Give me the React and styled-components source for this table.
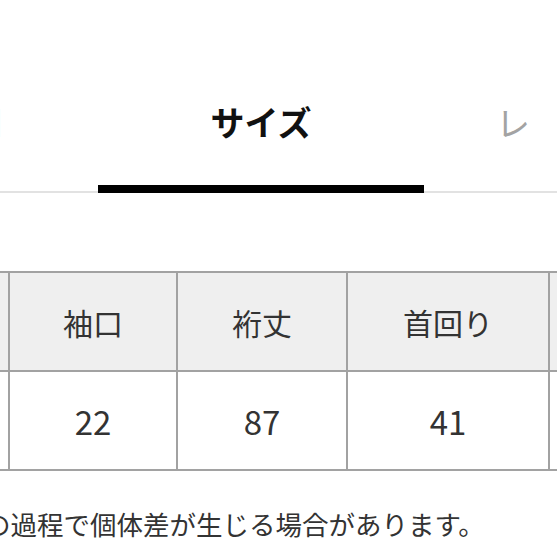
import React from "react";
import styled, { createGlobalStyle } from "styled-components";

const GlobalStyle = createGlobalStyle`
  html, body {
    margin: 0;
    padding: 0;
    background: #fff;
    overflow: hidden;
  }
  body {
    font-family: "Noto Sans CJK JP", "Noto Sans", sans-serif;
    color: #333;
  }
`;

const Root = styled.div`
  width: 557px;
  height: 557px;
  overflow: hidden;
`;

const TabBar = styled.div`
  display: flex;
  height: 193px;
  margin-left: -230px;
  box-shadow: inset 0 -2px 0 #e2e2e2;
`;

const Tab = styled.div`
  flex: 0 0 auto;
  width: ${(props) => props.$width}px;
  box-sizing: border-box;
  padding-top: 105px;
  text-align: ${(props) => props.$align || "center"};
  padding-left: ${(props) => props.$indent || 0}px;
  font-size: 34px;
  line-height: 34px;
  white-space: nowrap;
  font-weight: ${(props) => (props.$active ? 700 : 400)};
  color: ${(props) => (props.$active ? "#111" : "#a3a3a3")};
  border-bottom: 8px solid
    ${(props) => (props.$active ? "#000" : "transparent")};
`;

const TableWrap = styled.div`
  margin-top: 78px;
  overflow: hidden;
`;

const Grid = styled.div`
  display: grid;
  grid-template-columns: 166px 166px 168px 200px 166px;
  grid-auto-rows: 97px;
  gap: 2px;
  padding: 2px;
  width: max-content;
  margin-left: -160px;
  background: #a2a2a2;
`;

const Cell = styled.div`
  display: flex;
  align-items: center;
  justify-content: center;
  background: ${(props) => (props.$head ? "#efefef" : "#fff")};
  font-size: ${(props) => (props.$head ? 30 : 33)}px;
  color: #333;
  white-space: nowrap;
`;

const Note = styled.p`
  margin: 40px 0 0 -69px;
  font-size: 26.5px;
  line-height: 26px;
  color: #333;
  white-space: nowrap;
`;

const tabs = [
  { label: "商品説明", width: 328 },
  { label: "サイズ", width: 326, active: true },
  { label: "レ", width: 200, align: "left", indent: 72 },
];

const columns = [
  { name: "身幅", value: "58" },
  { name: "袖口", value: "22" },
  { name: "裄丈", value: "87" },
  { name: "首回り", value: "41" },
  { name: "着丈", value: "70" },
];

export default function App() {
  return (
    <Root>
      <GlobalStyle />
      <TabBar>
        {tabs.map((t) => (
          <Tab
            key={t.label}
            $width={t.width}
            $active={t.active}
            $align={t.align}
            $indent={t.indent}
          >
            {t.label}
          </Tab>
        ))}
      </TabBar>
      <TableWrap>
        <Grid>
          {columns.map((c) => (
            <Cell key={"h" + c.name} $head>
              {c.name}
            </Cell>
          ))}
          {columns.map((c) => (
            <Cell key={"v" + c.name}>{c.value}</Cell>
          ))}
        </Grid>
      </TableWrap>
      <Note>製造の過程で個体差が生じる場合があります。</Note>
    </Root>
  );
}
